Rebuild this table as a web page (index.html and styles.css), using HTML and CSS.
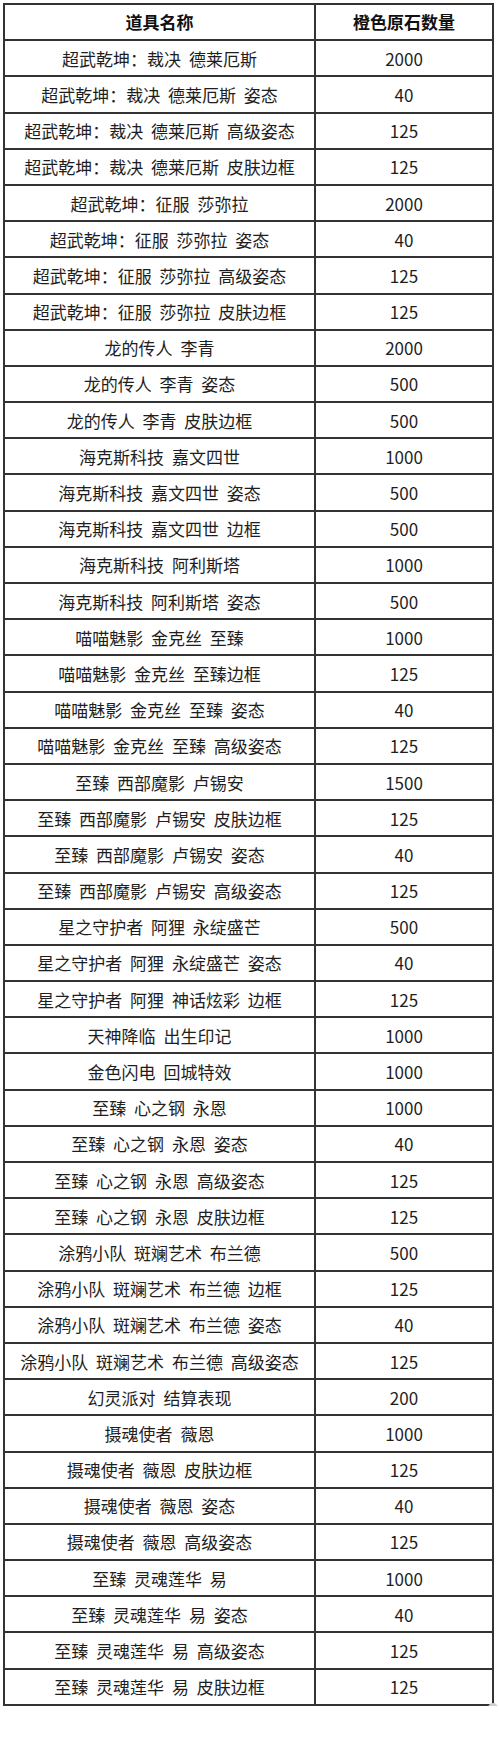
FILE: index.html
```html
<!DOCTYPE html>
<html lang="zh-CN">
<head>
<meta charset="utf-8">
<title>橙色原石数量</title>
<link rel="stylesheet" href="styles.css">
</head>
<body>
<div class="sheet">
<div class="price-grid">
<div class="cell head">道具名称</div><div class="cell head">橙色原石数量</div>
<div class="cell">超武乾坤：裁决 德莱厄斯</div><div class="cell">2000</div>
<div class="cell">超武乾坤：裁决 德莱厄斯 姿态</div><div class="cell">40</div>
<div class="cell">超武乾坤：裁决 德莱厄斯 高级姿态</div><div class="cell">125</div>
<div class="cell">超武乾坤：裁决 德莱厄斯 皮肤边框</div><div class="cell">125</div>
<div class="cell">超武乾坤：征服 莎弥拉</div><div class="cell">2000</div>
<div class="cell">超武乾坤：征服 莎弥拉 姿态</div><div class="cell">40</div>
<div class="cell">超武乾坤：征服 莎弥拉 高级姿态</div><div class="cell">125</div>
<div class="cell">超武乾坤：征服 莎弥拉 皮肤边框</div><div class="cell">125</div>
<div class="cell">龙的传人 李青</div><div class="cell">2000</div>
<div class="cell">龙的传人 李青 姿态</div><div class="cell">500</div>
<div class="cell">龙的传人 李青 皮肤边框</div><div class="cell">500</div>
<div class="cell">海克斯科技 嘉文四世</div><div class="cell">1000</div>
<div class="cell">海克斯科技 嘉文四世 姿态</div><div class="cell">500</div>
<div class="cell">海克斯科技 嘉文四世 边框</div><div class="cell">500</div>
<div class="cell">海克斯科技 阿利斯塔</div><div class="cell">1000</div>
<div class="cell">海克斯科技 阿利斯塔 姿态</div><div class="cell">500</div>
<div class="cell">喵喵魅影 金克丝 至臻</div><div class="cell">1000</div>
<div class="cell">喵喵魅影 金克丝 至臻边框</div><div class="cell">125</div>
<div class="cell">喵喵魅影 金克丝 至臻 姿态</div><div class="cell">40</div>
<div class="cell">喵喵魅影 金克丝 至臻 高级姿态</div><div class="cell">125</div>
<div class="cell">至臻 西部魔影 卢锡安</div><div class="cell">1500</div>
<div class="cell">至臻 西部魔影 卢锡安 皮肤边框</div><div class="cell">125</div>
<div class="cell">至臻 西部魔影 卢锡安 姿态</div><div class="cell">40</div>
<div class="cell">至臻 西部魔影 卢锡安 高级姿态</div><div class="cell">125</div>
<div class="cell">星之守护者 阿狸 永绽盛芒</div><div class="cell">500</div>
<div class="cell">星之守护者 阿狸 永绽盛芒 姿态</div><div class="cell">40</div>
<div class="cell">星之守护者 阿狸 神话炫彩 边框</div><div class="cell">125</div>
<div class="cell">天神降临 出生印记</div><div class="cell">1000</div>
<div class="cell">金色闪电 回城特效</div><div class="cell">1000</div>
<div class="cell">至臻 心之钢 永恩</div><div class="cell">1000</div>
<div class="cell">至臻 心之钢 永恩 姿态</div><div class="cell">40</div>
<div class="cell">至臻 心之钢 永恩 高级姿态</div><div class="cell">125</div>
<div class="cell">至臻 心之钢 永恩 皮肤边框</div><div class="cell">125</div>
<div class="cell">涂鸦小队 斑斓艺术 布兰德</div><div class="cell">500</div>
<div class="cell">涂鸦小队 斑斓艺术 布兰德 边框</div><div class="cell">125</div>
<div class="cell">涂鸦小队 斑斓艺术 布兰德 姿态</div><div class="cell">40</div>
<div class="cell">涂鸦小队 斑斓艺术 布兰德 高级姿态</div><div class="cell">125</div>
<div class="cell">幻灵派对 结算表现</div><div class="cell">200</div>
<div class="cell">摄魂使者 薇恩</div><div class="cell">1000</div>
<div class="cell">摄魂使者 薇恩 皮肤边框</div><div class="cell">125</div>
<div class="cell">摄魂使者 薇恩 姿态</div><div class="cell">40</div>
<div class="cell">摄魂使者 薇恩 高级姿态</div><div class="cell">125</div>
<div class="cell">至臻 灵魂莲华 易</div><div class="cell">1000</div>
<div class="cell">至臻 灵魂莲华 易 姿态</div><div class="cell">40</div>
<div class="cell">至臻 灵魂莲华 易 高级姿态</div><div class="cell">125</div>
<div class="cell">至臻 灵魂莲华 易 皮肤边框</div><div class="cell">125</div>
</div>
<span class="corner-dot"></span>
</div>
</body>
</html>
```
FILE: styles.css
```css
html, body {
  margin: 0;
  padding: 0;
  background: #ffffff;
}

body {
  font-family: "Noto Sans CJK SC", "Noto Sans", sans-serif;
  color: #1e1e1e;
}

.sheet {
  position: relative;
  padding: 3px 0 0 3px;
}

.price-grid {
  display: grid;
  grid-template-columns: 309px 176px;
  grid-auto-rows: 34.2px;
  gap: 2px;
  padding: 2px;
  width: max-content;
  background: #333333;
}

.cell {
  background: #ffffff;
  display: flex;
  align-items: center;
  justify-content: center;
  padding-top: 1px;
  box-sizing: border-box;
  font-size: 17px;
  line-height: 20px;
  word-spacing: 4px;
  white-space: nowrap;
}

.cell.head {
  font-weight: 700;
  color: #111111;
  padding-top: 0;
}

.corner-dot {
  position: absolute;
  left: 488px;
  top: 1703px;
  width: 10px;
  height: 10px;
  border-radius: 50%;
  background: #cfcfcf;
}
```
